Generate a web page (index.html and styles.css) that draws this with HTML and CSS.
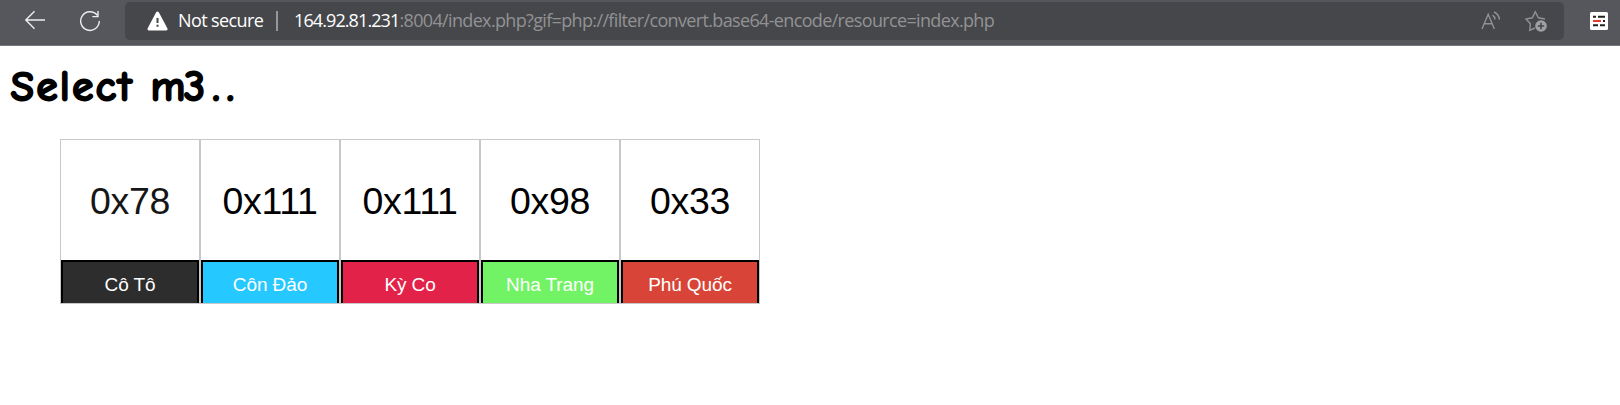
FILE: index.html
```html
<!DOCTYPE html>
<html lang="en">
<head>
<meta charset="utf-8">
<title>Select m3..</title>
<link rel="stylesheet" href="styles.css">
</head>
<body>
<header class="toolbar">
  <svg class="back" width="22" height="20" viewBox="0 0 22 20"><path d="M21 10H2M10.5 1.3 1.8 10l8.7 8.7"/></svg>
  <svg class="reload" width="22" height="22" viewBox="0 0 22 22"><path d="M20.3 11A9.3 9.3 0 1 1 18.2 5.2M19 1v5.6h-5.6"/></svg>
  <div class="address">
    <svg class="warning" width="21" height="20" viewBox="0 0 21 20"><path class="tri" d="M10.5 2 19 18H2Z"/><path class="mark" d="M10.5 7v5M10.5 13.8v2"/></svg>
    <span class="insecure">Not secure</span>
    <span class="divider"></span>
    <span class="url"><span class="host">164.92.81.231</span><span class="path">:8004/index.php?gif=php://filter/convert.base64-encode/resource=index.php</span></span>
    <svg class="read" width="21" height="20" viewBox="0 0 21 20"><path d="M1 18 7.2 3.2 13.4 18M3.3 12.8h7.8M11.5 4.2c1.7 1 2.4 2.5 2.4 4.2M13 1c3.4 1.7 5.3 4.2 5.5 7.6"/></svg>
    <svg class="star" width="23" height="23" viewBox="0 0 23 23"><path d="M9.8 18 4.7 20.3 5.4 13.7 1 9 7.3 7.8 10.3 1.8 13.4 7.8 20 9"/><circle cx="16" cy="16" r="5.8"/><path class="plus" d="M16 12.8v6.4M12.8 16h6.4"/></svg>
  </div>
  <svg class="extension" width="18" height="18" viewBox="0 0 18 18"><rect width="18" height="18" rx="1.5" fill="#fff"/><path stroke="#222" d="M3 4.8h3M8 4.8h7M3 13.2h5M10 13.2h5"/><path stroke="#e83a30" d="M3 9h8"/><path stroke="#222" d="M13 9h2"/></svg>
</header>
<main>
  <h1 class="title"><span class="word">Select</span><span class="letter">m</span><span class="digit">3</span><span class="dots">..</span></h1>
  <div class="cards">
    <div class="card"><div class="code soft">0x78</div><div class="label dark">Cô Tô</div></div>
    <div class="card"><div class="code">0x111</div><div class="label blue">Côn Đảo</div></div>
    <div class="card"><div class="code">0x111</div><div class="label red">Kỳ Co</div></div>
    <div class="card"><div class="code">0x98</div><div class="label green">Nha Trang</div></div>
    <div class="card"><div class="code">0x33</div><div class="label brick">Phú Quốc</div></div>
  </div>
</main>
</body>
</html>
```
FILE: styles.css
```css
* { box-sizing: border-box; }
body { margin: 0; background: #fff; color: #000; font-family: Arial, "Liberation Sans", sans-serif; overflow: hidden; }
svg { flex: none; fill: none; }
.toolbar { height: 46px; display: flex; align-items: flex-start; background: #56575c; border-bottom: 1px solid #77787c; }
.back { margin: 10px 0 0 24px; stroke: #eee; stroke-width: 1.4; }
.reload { margin: 10px 0 0 33px; stroke: #eee; stroke-width: 1.4; }
.address { display: flex; align-items: center; width: 1439px; height: 38px; margin: 2px 0 0 24px; padding-left: 22px; border-radius: 5px; background: #46474b; font: 18px/36px "Segoe UI", "Open Sans", sans-serif; white-space: nowrap; }
.tri { fill: #fff; stroke: #fff; stroke-width: 3; stroke-linejoin: round; }
.mark { stroke: #46474b; stroke-width: 2; }
.insecure { width: 83px; margin: 0 0 2px 10px; color: #fff; letter-spacing: -0.6px; }
.divider { width: 2px; height: 20px; margin-left: 15px; background: #96979a; }
.url { width: 702px; margin: 0 0 2px 16px; }
.host { color: #fff; letter-spacing: -0.9px; }
.path { color: #929294; letter-spacing: -0.65px; }
.read { margin-left: 485px; stroke: #929294; stroke-width: 1.4; }
.star { margin-left: 23px; stroke: #929294; stroke-width: 1.4; }
.star circle { fill: #a0a0a2; stroke: none; }
.star .plus { stroke: #46474b; stroke-width: 1.6; }
.extension { margin: 12px 0 0 26px; stroke-width: 2; }
.title { display: flex; height: 58px; margin: 12px 0 0 11px; font: 400 41px/58px "Comic Sans MS", "Comic Neue", "Open Sans", sans-serif; -webkit-text-stroke: 3px #000; stroke-linejoin: round; }
.word { width: 140px; letter-spacing: 3.1px; }
.letter { width: 33px; }
.digit { width: 29px; }
.dots { letter-spacing: 8px; }
.cards { display: flex; margin: 23px 0 0 60px; }
.card { width: 140px; height: 165px; border: 1px solid #c8c8c8; }
.code { height: 120px; font-size: 37.5px; line-height: 123px; text-align: center; letter-spacing: -0.3px; }
.soft { color: #161616; }
.label { height: 43px; border: 2px solid #000; border-bottom: 0; color: #fff; font-size: 19px; line-height: 45px; text-align: center; letter-spacing: -0.1px; }
.dark { background: #2d2d2d; }
.blue { background: #25c8ff; }
.red { background: #e22249; }
.green { background: #72f365; }
.brick { background: #d84538; }
```
